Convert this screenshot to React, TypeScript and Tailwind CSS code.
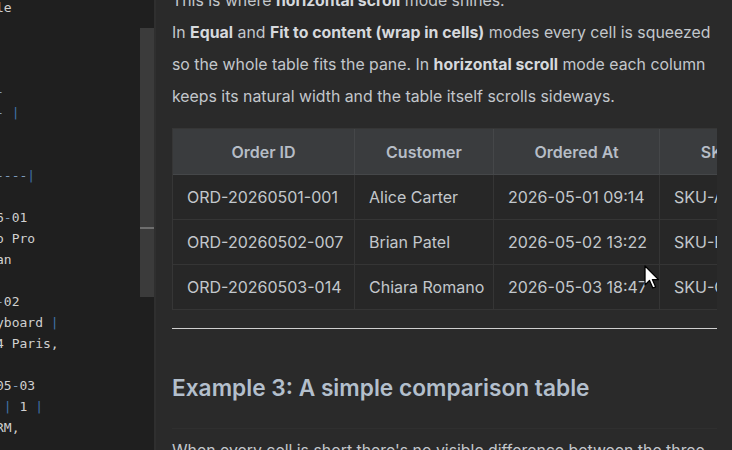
import React from 'react'

const editorLines = [
  'le',
  '',
  '',
  '',
  '-',
  '- |',
  '',
  '',
  '----|',
  '',
  '6-01',
  'o Pro',
  'an',
  '',
  '-02',
  'yboard |',
  '4 Paris,',
  '',
  '05-03',
  ' | 1 |',
  'RM,',
  '',
]

const rows = [
  ['ORD-20260501-001', 'Alice Carter', '2026-05-01 09:14', 'SKU-A1042'],
  ['ORD-20260502-007', 'Brian Patel', '2026-05-02 13:22', 'SKU-B2210'],
  ['ORD-20260503-014', 'Chiara Romano', '2026-05-03 18:47', 'SKU-C3318'],
]

const headers = ['Order ID', 'Customer', 'Ordered At', 'SKU']

function CodeLine({ text }: { text: string }) {
  return (
    <div className="h-[21px] whitespace-pre">
      {text.split('').map((ch, i) => {
        if (ch === '|') return <span key={i} className="text-[#3f72a8]">{ch}</span>
        if (ch === '-') return <span key={i} className="text-[#7d9bbb]">{ch}</span>
        return <span key={i}>{ch}</span>
      })}
      {text === '' && ' '}
    </div>
  )
}

function Cursor() {
  return (
    <svg
      className="absolute left-[488px] top-[265px]"
      width="16"
      height="26"
      viewBox="0 0 16 26"
    >
      <path
        d="M1 1 L1 20 L5.5 15.5 L8.8 23 L11.6 21.8 L8.4 14.6 L14.5 14.6 Z"
        fill="#ffffff"
        stroke="#000000"
        strokeWidth="1.3"
        strokeLinejoin="round"
      />
    </svg>
  )
}

export default function App() {
  return (
    <div className="flex w-[732px] h-[450px] overflow-hidden bg-[#2a2a2a]">
      {/* editor */}
      <div className="w-[140px] h-full overflow-hidden bg-[#1f1f1f] text-[#d0d0d0] font-['DejaVu_Sans_Mono',monospace] text-[13px] leading-[21px]">
        <div className="-mt-[3.5px] -ml-[4px]">
          {editorLines.map((l, i) => (
            <CodeLine key={i} text={l} />
          ))}
        </div>
      </div>

      {/* scrollbar */}
      <div className="w-[14px] h-full bg-[#1f1f1f] pt-[28px]">
        <div className="h-[269px] bg-[#3b3b3b] pt-[199px]">
          <div className="h-[2px] bg-[#6e6e6e]" />
        </div>
      </div>
      <div className="w-[2px] h-full bg-[#2f2f2f]" />

      {/* preview */}
      <div className="relative flex-1 h-full overflow-hidden pl-[16px] pr-[15px] font-['Inter',sans-serif] text-[#c3c7cc]">
        <div className="-mt-[15px] text-[15.85px] leading-[32px] whitespace-nowrap">
          <div>
            This is where <b className="font-bold text-[#d6d9dd]">horizontal scroll</b> mode shines.
          </div>
          <div>
            In <b className="font-bold text-[#d6d9dd]">Equal</b> and{' '}
            <b className="font-bold text-[#d6d9dd]">Fit to content (wrap in cells)</b> modes every cell is squeezed
          </div>
          <div>
            so the whole table fits the pane. In <b className="font-bold text-[#d6d9dd]">horizontal scroll</b> mode each column
          </div>
          <div>keeps its natural width and the table itself scrolls sideways.</div>
        </div>

        <div className="mt-[15px] w-[545px] overflow-hidden">
          <div className="grid grid-cols-[182px_139px_166px_116px] w-max text-[16px] whitespace-nowrap border-l border-t border-[#363636]">
            {headers.map((h) => (
              <div
                key={h}
                className="h-[46px] flex items-center justify-center bg-[#3a3c3e] border-r border-b border-[#454749] font-semibold text-[#b6bdc6]"
              >
                {h}
              </div>
            ))}
            {rows.map((r, ri) =>
              r.map((c, ci) => (
                <div
                  key={ri + '-' + ci}
                  className="h-[45px] flex items-center px-[14px] bg-[#272727] border-r border-b border-[#353535] text-[#c3c7cc]"
                >
                  {c}
                </div>
              ))
            )}
          </div>
        </div>

        <div className="mt-[18px] h-px w-[545px] bg-[#cfcfcf]" />

        <div className="mt-[43px] w-[545px] pb-[24px] border-b border-[#2f2f2f] text-[22.7px] leading-[32px] font-semibold text-[#b3bfcc] whitespace-nowrap">
          Example 3: A simple comparison table
        </div>

        <div className="mt-[6px] text-[15.85px] leading-[32px] whitespace-nowrap">
          When every cell is short there's no visible difference between the three
        </div>

        <Cursor />
      </div>
    </div>
  )
}
